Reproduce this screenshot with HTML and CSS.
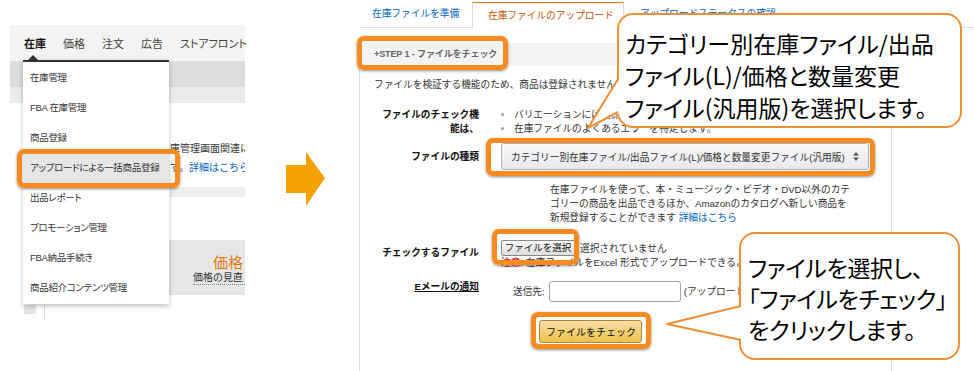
FILE: index.html
```html
<!DOCTYPE html>
<html lang="ja">
<head>
    <meta charset="UTF-8">
    <meta name="viewport" content="width=device-width, initial-scale=1.0">
    <title>在庫ファイルのアップロード</title>
    <link rel="stylesheet" href="styles.css">
</head>
<body>
<div class="page">
    <!-- 左: セラーセントラルのメニュー -->
    <div class="left">
        <div class="nav">
            <span class="nav-item active">在庫</span>
            <span class="nav-item">価格</span>
            <span class="nav-item">注文</span>
            <span class="nav-item">広告</span>
            <span class="nav-item">ストアフロント</span>
        </div>
        <div class="subbar"></div>
        <div class="subbar light"></div>
        <div class="intro">
            <div>在庫管理画面関連について</div>
            <div>ます。<span class="link">詳細はこちら</span></div>
        </div>
        <div class="band"></div>
        <div class="price-card">
            <div class="price-title">価格</div>
            <div class="price-sub">価格の見直し</div>
        </div>
        <div class="foot"><span class="foot-box"></span><span class="foot-line"></span></div>

        <ul class="dropdown">
            <li>在庫管理</li>
            <li>FBA 在庫管理</li>
            <li>商品登録</li>
            <li class="selected">アップロードによる一括商品登録</li>
            <li>出品レポート</li>
            <li>プロモーション管理</li>
            <li>FBA納品手続き</li>
            <li>商品紹介コンテンツ管理</li>
        </ul>
        <div class="hl hl-menu"></div>
    </div>

    <!-- 矢印 -->
    <div class="arrow">
        <svg width="40" height="56" viewBox="0 0 40 56">
            <polygon points="0,13 20,13 20,0 39,26 20,54 20,41 0,41" fill="#f5a100"/>
        </svg>
    </div>

    <!-- 右: アップロード画面 -->
    <div class="right">
        <div class="tabs">
            <div class="tab">在庫ファイルを準備</div>
            <div class="tab active">在庫ファイルのアップロード</div>
            <div class="tab">アップロードステータスの確認</div>
        </div>
        <div class="panel">
            <div class="step">+STEP 1 - ファイルをチェック</div>
            <p class="note">ファイルを検証する機能のため、商品は登録されません。</p>

            <div class="row row-check">
                <div class="label">ファイルのチェック機<br>能は、</div>
                <ul class="value bullets">
                    <li>バリエーションには関係なく、ファイルの形式を確認します。</li>
                    <li>在庫ファイルのよくあるエラーを特定します。</li>
                </ul>
            </div>

            <div class="row row-type">
                <div class="label label-mid">ファイルの種類</div>
                <div class="value">
                    <div class="select">
                        <span>カテゴリー別在庫ファイル/出品ファイル(L)/価格と数量変更ファイル(汎用版)</span>
                        <svg width="6" height="9" viewBox="0 0 6 9">
                            <polygon points="3,0 6,3.5 0,3.5" fill="#555"/>
                            <polygon points="0,5.5 6,5.5 3,9" fill="#555"/>
                        </svg>
                    </div>
                </div>
            </div>

            <div class="row row-desc">
                <div class="label"></div>
                <div class="value desc">
                    在庫ファイルを使って、本・ミュージック・ビデオ・DVD以外のカテ<br>
                    ゴリーの商品を出品できるほか、Amazonのカタログへ新しい商品を<br>
                    新規登録することができます <span class="link">詳細はこちら</span>
                </div>
            </div>

            <div class="row row-file">
                <div class="label label-file">チェックするファイル</div>
                <div class="value">
                    <div class="file-line"><button class="file-btn" type="button">ファイルを選択</button><span>選択されていません</span></div>
                    <div class="file-hint"><span class="err">注意:</span> 在庫ファイルをExcel 形式でアップロードできるようになりました</div>
                </div>
            </div>

            <div class="row row-mail">
                <div class="label"><span class="underline">Eメールの通知</span></div>
                <div class="value mail">
                    <span class="mail-to">送信先:</span>
                    <input class="mail-input" type="text">
                    <span class="mail-after">(アップロードが完了したら通知します)</span>
                </div>
            </div>

            <div class="row row-submit">
                <div class="label"></div>
                <div class="value"><button class="check-btn" type="button">ファイルをチェック</button></div>
            </div>
        </div>

        <!-- 強調枠 -->
        <div class="hl hl-step"></div>
        <div class="hl hl-select"></div>
        <div class="hl hl-file"></div>
        <div class="hl hl-check"></div>

        <!-- 吹き出し -->
        <div class="callout callout-top">カテゴリー別在庫ファイル/出品<br>ファイル(L)/価格と数量変更<br>ファイル(汎用版)を選択します。</div>
        <svg class="tail tail-top" width="36" height="58" viewBox="0 0 36 58">
            <polygon points="34,4 2,54 34,39" fill="#fff"/>
            <polyline points="32,5 2,54 32,38" fill="none" stroke="#ef8f38" stroke-width="2" stroke-linejoin="round"/>
        </svg>
        <div class="callout callout-bottom">ファイルを選択し、<br>「ファイルをチェック」<br>をクリックします。</div>
        <svg class="tail tail-bottom" width="80" height="46" viewBox="0 0 80 46">
            <polygon points="78,5 2,24 78,41" fill="#fff"/>
            <polyline points="76,6 2,24 76,40" fill="none" stroke="#ef8f38" stroke-width="2" stroke-linejoin="round"/>
        </svg>
    </div>
</div>
</body>
</html>
```

FILE: styles.css
```css
body {
    margin: 0;
    background: #fff;
    font-family: "Liberation Sans", "Noto Sans CJK JP", sans-serif;
    font-size: 9.7px;
    color: #333;
}
.page {
    display: flex;
    width: 974px;
    height: 371px;
    overflow: hidden;
}
.link {
    color: #0066c0;
}

/* 左パネル */
.left {
    position: relative;
    width: 235px;
    margin: 25px 0 0 10px;
}
.nav {
    display: flex;
    align-items: center;
    gap: 17px;
    height: 36px;
    padding-left: 14px;
    background: #f3f3f3;
    font-size: 11px;
    font-feature-settings: "palt";
    color: #444;
}
.nav-item {
    white-space: nowrap;
}
.nav-item.active {
    font-weight: bold;
    color: #111;
}
.subbar {
    height: 26px;
    background: #dcdcdc;
}
.subbar.light {
    height: 16px;
    background: #ebebeb;
}
.intro {
    margin-top: 36px;
    padding-left: 150px;
    font-size: 10px;
    line-height: 19px;
    white-space: nowrap;
    overflow: hidden;
}
.band {
    height: 10px;
    margin: 10px 0 0 160px;
    background: #eeeeee;
}
.price-card {
    height: 55px;
    margin: 43px 0 0 35px;
    padding: 12px 0 0 148px;
    box-sizing: border-box;
    background: #e6e6e6;
    white-space: nowrap;
    overflow: hidden;
}
.price-title {
    margin-left: 20px;
    font-size: 15px;
    line-height: 19px;
    color: #e47911;
    font-family: "Noto Sans CJK JP", sans-serif;
}
.price-sub {
    display: inline-block;
    font-size: 10px;
    line-height: 13px;
    border-bottom: 1px dotted #888;
}
.foot {
    display: flex;
    margin-top: 10px;
}
.foot-box {
    width: 12px;
    height: 9px;
    margin-left: 14px;
    background: #e3e3e3;
}
.foot-line {
    width: 1px;
    height: 16px;
    margin-left: 8px;
    background: #dddddd;
}
.dropdown {
    position: absolute;
    left: 13px;
    top: 35px;
    width: 146px;
    height: 244px;
    margin: 0;
    padding: 1px 0 0;
    box-sizing: border-box;
    list-style: none;
    background: #fff;
    border-top: 2px solid #333;
    box-shadow: 0 2px 5px rgba(0, 0, 0, 0.25);
}
.dropdown::before {
    content: "";
    position: absolute;
    left: 5px;
    top: -7px;
    border-left: 5px solid transparent;
    border-right: 5px solid transparent;
    border-bottom: 5px solid #333;
}
.dropdown li {
    height: 30px;
    line-height: 30px;
    padding-left: 7px;
    font-size: 9.5px;
    letter-spacing: -0.3px;
    font-feature-settings: "palt";
    white-space: nowrap;
    color: #333;
}
.dropdown li.selected {
    background: #e6e6e6;
}

/* 強調枠 */
.hl {
    position: absolute;
    box-sizing: border-box;
    border: 5px solid #f68b1f;
    border-radius: 7px;
    box-shadow: 0 1px 3px rgba(0, 0, 0, 0.45);
}
.hl-menu {
    left: 7px;
    top: 124px;
    width: 163px;
    height: 39px;
}

/* 矢印 */
.arrow {
    width: 114px;
    padding: 152px 0 0 41px;
    box-sizing: border-box;
}

/* 右パネル */
.right {
    position: relative;
    width: 615px;
}
.tabs {
    display: flex;
    height: 28px;
    box-sizing: border-box;
    border-bottom: 1px solid #dddddd;
    white-space: nowrap;
}
.tab {
    padding: 0 13px;
    line-height: 28px;
    color: #0066c0;
}
.tab:first-child {
    width: 113px;
    box-sizing: border-box;
}
.tab.active {
    width: 152px;
    box-sizing: border-box;
    margin-top: 2px;
    margin-bottom: -1px;
    padding-left: 15px;
    line-height: 25px;
    background: #fff;
    color: #c45500;
    border: 1px solid #dddddd;
    border-top-color: #e77600;
    border-bottom: none;
}
.tab.active + .tab {
    padding-left: 16px;
}
.panel {
    width: 533px;
    height: 336px;
    box-sizing: border-box;
    border: 1px solid #dddddd;
    border-top: none;
    border-radius: 0 0 4px 4px;
}
.step {
    height: 23px;
    margin-top: 15px;
    padding-left: 14px;
    line-height: 23px;
    background: #f3f3f3;
    font-weight: bold;
    font-size: 9px;
    letter-spacing: -0.1px;
    color: #666;
}
.note {
    margin: 12px 0 0 14px;
    line-height: 14px;
}
.row {
    display: flex;
}
.label {
    width: 119px;
    flex: none;
    text-align: right;
    font-weight: bold;
    line-height: 14px;
    color: #111;
}
.value {
    margin: 0 0 0 22px;
    white-space: nowrap;
}
.row-check {
    margin-top: 16px;
}
.bullets {
    padding: 0 0 0 13px;
    line-height: 14px;
}
.bullets li::marker {
    color: #999;
}
.row-type {
    margin-top: 7px;
}
.label-mid {
    line-height: 27px;
}
.select {
    display: flex;
    align-items: center;
    justify-content: space-between;
    width: 368px;
    height: 27px;
    padding: 0 9px 0 9px;
    box-sizing: border-box;
    border: 1px solid #adb1b8;
    border-radius: 3px;
    background: linear-gradient(#f7f8fa, #e7e9ec);
    box-shadow: 0 1px 0 rgba(255, 255, 255, 0.6) inset;
    color: #333;
}
.row-desc {
    margin-top: 13px;
}
.desc {
    padding-left: 49px;
    line-height: 14px;
}
.row-file {
    margin-top: 15px;
}
.label-file {
    padding-top: 6px;
}
.file-line {
    display: flex;
    align-items: center;
    height: 16px;
    gap: 5px;
}
.file-btn {
    width: 74px;
    height: 16px;
    padding: 0 2px;
    font: inherit;
    font-size: 9.5px;
    line-height: 14px;
    color: #111;
    background: linear-gradient(#f6f6f6, #dedede);
    border: 1px solid #8a8a8a;
    border-radius: 2px;
}
.file-hint {
    line-height: 14px;
}
.err {
    color: #c40000;
}
.row-mail {
    margin-top: 10px;
}
.underline {
    text-decoration: underline;
}
.mail {
    display: flex;
    align-items: center;
    height: 22px;
    padding-left: 12px;
}
.mail-input {
    width: 132px;
    height: 21px;
    margin: 1px 3px 0 4px;
    box-sizing: border-box;
    border: 1px solid #a6a6a6;
    border-radius: 3px;
}
.row-submit {
    margin-top: 18px;
}
.check-btn {
    width: 103px;
    height: 23px;
    margin-left: 38px;
    font: inherit;
    font-size: 10px;
    color: #111;
    background: linear-gradient(#f7dfa5, #f0c14b);
    border: 1px solid #a88734;
    border-radius: 3px;
}
.hl-step {
    left: -2px;
    top: 36px;
    width: 151px;
    height: 34px;
}
.hl-select {
    left: 127px;
    top: 138px;
    width: 389px;
    height: 38px;
}
.hl-file {
    left: 133px;
    top: 229px;
    width: 87px;
    height: 36px;
}
.hl-check {
    left: 172px;
    top: 312px;
    width: 120px;
    height: 37px;
}

/* 吹き出し */
.callout {
    position: absolute;
    box-sizing: border-box;
    background: #fff;
    border: 2px solid #ef8f38;
    border-radius: 16px;
    font-family: "Noto Sans CJK JP", sans-serif;
    font-feature-settings: "palt";
    font-size: 23px;
    color: #000;
    white-space: nowrap;
}
.callout-top {
    left: 258px;
    top: 13px;
    width: 345px;
    height: 115px;
    padding: 12px 0 0 6px;
    line-height: 32px;
}
.callout-bottom {
    left: 380px;
    top: 232px;
    width: 221px;
    height: 128px;
    padding: 18px 0 0 7px;
    line-height: 31px;
    letter-spacing: -0.3px;
}
.tail {
    position: absolute;
}
.tail-top {
    left: 227px;
    top: 74px;
}
.tail-bottom {
    left: 306px;
    top: 300px;
}
```
